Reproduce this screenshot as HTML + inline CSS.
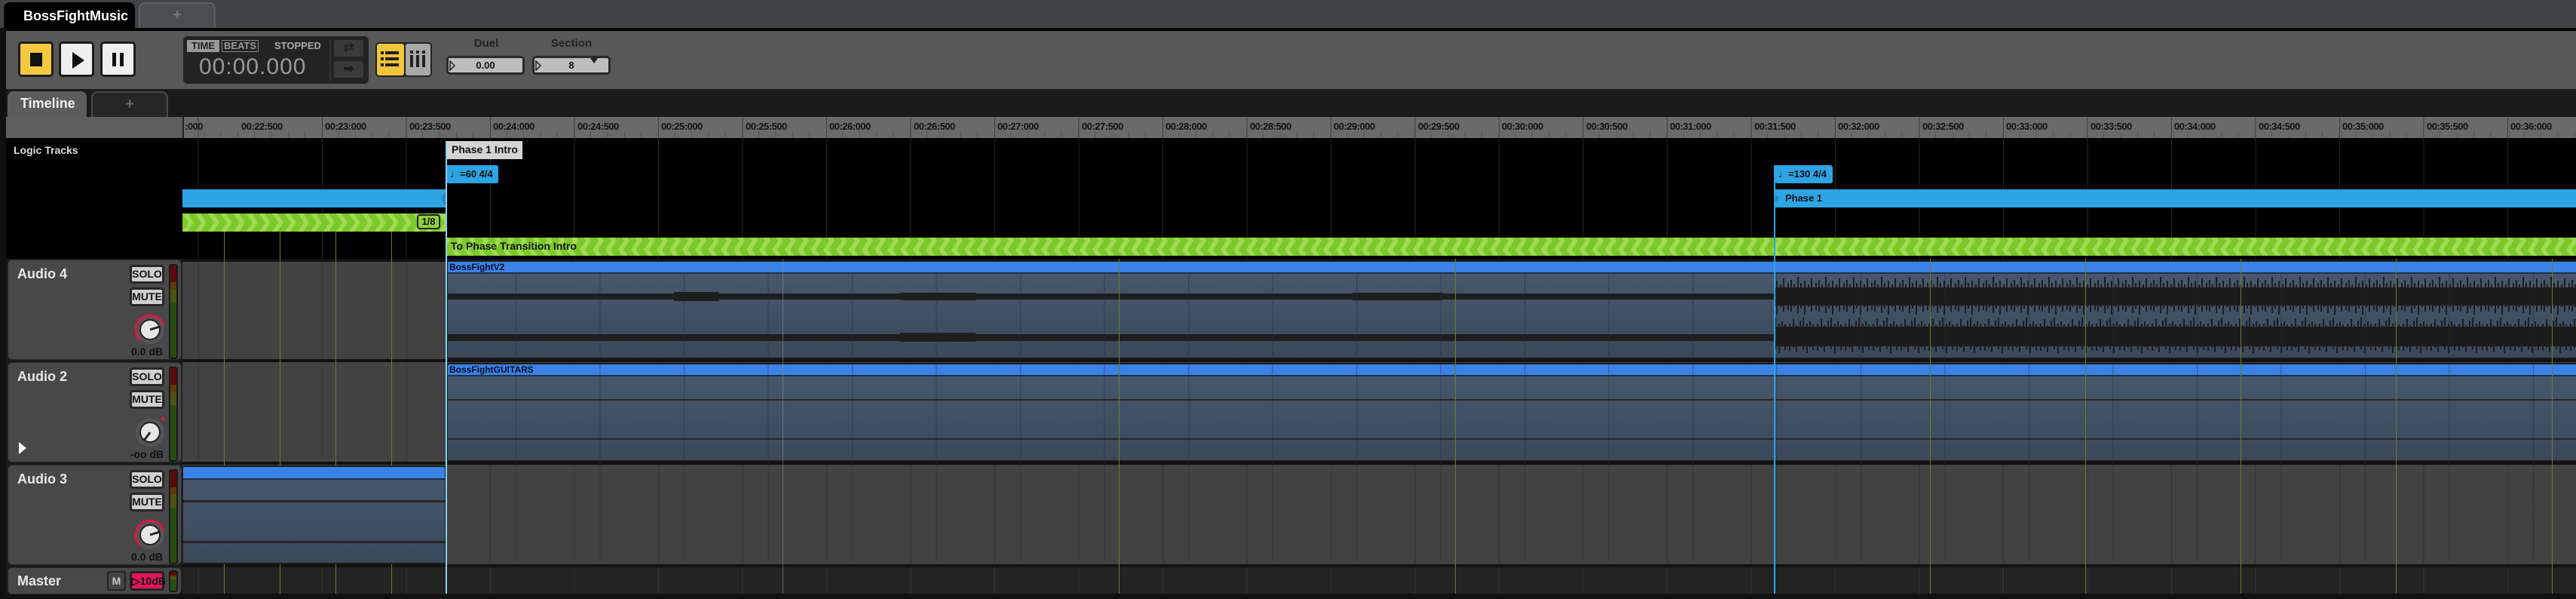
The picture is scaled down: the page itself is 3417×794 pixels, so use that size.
<!DOCTYPE html>
<html><head><meta charset="utf-8">
<style>
*{margin:0;padding:0;box-sizing:border-box}
body{width:3417px;height:794px;background:#1a1a1a;position:relative;overflow:hidden;font-family:"Liberation Sans Narrow","Liberation Sans",sans-serif;font-weight:bold;font-stretch:condensed}
.a{position:absolute}
.btn{position:absolute;border:3px solid #1b1b1b;border-radius:5px}
.rl{position:absolute;top:160px;font-size:13px;color:#111;letter-spacing:-0.5px}
.hdr{position:absolute;left:10px;width:231px;background:#484848;border-radius:6px;border:1px solid #2a2a2a}
.tname{position:absolute;left:12px;font-size:18px;color:#e8e8e8}
.sb{position:absolute;left:161px;width:46px;height:25px;background:#cfcfcf;border:3px solid #262626;border-radius:4px;font-size:14px;color:#111;text-align:center;line-height:19px}
.meter{position:absolute;left:213px;width:12px;border:2px solid #1a1a1a;border-radius:3px;background:linear-gradient(#5a0a0a 0,#5a0a0a 18%,#5e3a0a 18%,#5e3a0a 26%,#4e5410 26%,#4e5410 40%,#244e14 40%,#244e14 100%)}
.db{position:absolute;left:160px;width:48px;text-align:center;font-size:14px;color:#111}
.clip{position:absolute;background:linear-gradient(#4a596e,#3b485a);border:2px solid #1c1c1c;border-radius:4px;overflow:hidden}
.ch{position:absolute;left:0;right:0;top:0;height:16px;background:#3a82e6;border-bottom:2px solid #1f2f48;font-size:12px;color:#0a0a20;padding-left:2px;line-height:14px}
</style></head><body>
<div class="a" style="left:0;top:0;width:3417px;height:37px;background:#404444"></div>
<div class="a" style="left:5px;top:3px;width:174px;height:36px;background:#000;border-radius:8px 8px 0 0;color:#fff;font-size:18px;padding:8px 0 0 26px">BossFightMusic</div>
<div class="a" style="left:184px;top:3px;width:102px;height:34px;background:#4a4e50;border:2px solid #5c6062;border-bottom:none;border-radius:8px 8px 0 0;color:#777;font-size:20px;text-align:center;line-height:30px">+</div>
<div class="a" style="left:0;top:37px;width:3417px;height:4px;background:#000"></div>
<div class="a" style="left:8px;top:41px;width:3409px;height:77px;background:#585858"></div>
<div class="a" style="left:0;top:37px;width:8px;height:757px;background:#111"></div>
<div class="btn" style="left:24px;top:55px;width:47px;height:47px;background:#f5c842"><div class="a" style="left:13px;top:12px;width:16px;height:18px;background:#111"></div></div>
<div class="btn" style="left:78px;top:55px;width:47px;height:47px;background:#eee"><svg class="a" style="left:12px;top:10px" width="20" height="24"><polygon points="3,1 19,12 3,23" fill="#111"/></svg></div>
<div class="btn" style="left:133px;top:55px;width:47px;height:47px;background:#eee"><div class="a" style="left:13px;top:12px;width:5px;height:18px;background:#111"></div><div class="a" style="left:23px;top:12px;width:5px;height:18px;background:#111"></div></div>
<div class="a" style="left:243px;top:48px;width:246px;height:63px;background:#232323;border-radius:6px"></div>
<div class="a" style="left:248px;top:53px;width:43px;height:16px;background:#9a9a9a;color:#222;font-size:13px;text-align:center;line-height:16px">TIME</div>
<div class="a" style="left:294px;top:53px;width:49px;height:16px;border:1px solid #888;color:#999;font-size:13px;text-align:center;line-height:14px">BEATS</div>
<div class="a" style="left:364px;top:53px;color:#aaa;font-size:13px;line-height:16px">STOPPED</div>
<div class="a" style="left:264px;top:72px;color:#999;font-size:30px;font-weight:normal;letter-spacing:1px;font-family:'Liberation Sans',sans-serif">00:00.000</div>
<div class="a" style="left:437px;top:52px;width:2px;height:56px;background:#333"></div>
<div class="a" style="left:443px;top:53px;width:39px;height:22px;background:#3a3a3a;border-radius:3px;color:#222;font-size:16px;text-align:center;line-height:22px">⇄</div>
<div class="a" style="left:443px;top:81px;width:39px;height:22px;background:#3a3a3a;border-radius:3px;color:#1a1a1a;font-size:16px;text-align:center;line-height:22px">➡</div>
<div class="a" style="left:498px;top:56px;width:75px;height:46px;background:#222;border-radius:5px"></div>
<div class="a" style="left:500px;top:58px;width:36px;height:42px;background:#f0c43c;border-radius:3px"></div>
<svg class="a" style="left:505px;top:67px" width="26" height="24"><g fill="#222"><rect x="0" y="1" width="4" height="4"/><rect x="6" y="1" width="18" height="4"/><rect x="0" y="9" width="4" height="4"/><rect x="6" y="9" width="18" height="4"/><rect x="0" y="17" width="4" height="4"/><rect x="6" y="17" width="18" height="4"/></g></svg>
<div class="a" style="left:538px;top:58px;width:33px;height:42px;background:#a8a8a8;border-radius:3px"></div>
<svg class="a" style="left:543px;top:67px" width="24" height="24"><g fill="#222"><rect x="1" y="0" width="4" height="4"/><rect x="1" y="6" width="4" height="16"/><rect x="9" y="0" width="4" height="4"/><rect x="9" y="6" width="4" height="16"/><rect x="17" y="0" width="4" height="4"/><rect x="17" y="6" width="4" height="16"/></g></svg>
<div class="a" style="left:620px;top:49px;width:50px;text-align:center;color:#222;font-size:15px">Duel</div>
<div class="a" style="left:592px;top:74px;width:104px;height:25px;background:#bdbdbd;border:3px solid #2a2a2a;border-radius:5px;font-size:13px;color:#111;text-align:center;line-height:19px">0.00</div>
<svg class="a" style="left:596px;top:80px" width="8" height="14"><polygon points="1,1 7,7 1,13" fill="none" stroke="#222" stroke-width="1.5"/></svg>
<div class="a" style="left:730px;top:49px;width:56px;text-align:center;color:#222;font-size:15px">Section</div>
<div class="a" style="left:706px;top:74px;width:104px;height:25px;background:#bdbdbd;border:3px solid #2a2a2a;border-radius:5px;font-size:13px;color:#111;text-align:center;line-height:19px">8</div>
<svg class="a" style="left:710px;top:80px" width="8" height="14"><polygon points="1,1 7,7 1,13" fill="none" stroke="#222" stroke-width="1.5"/></svg>
<svg class="a" style="left:783px;top:77px" width="10" height="8"><polygon points="0,0 10,0 5,7" fill="#222"/></svg>
<div class="a" style="left:8px;top:118px;width:3409px;height:37px;background:#1b1b1b"></div>
<div class="a" style="left:10px;top:121px;width:105px;height:34px;background:#5c5c5c;border-radius:8px 8px 0 0;color:#f0f0f0;font-size:18px;padding:6px 0 0 17px">Timeline</div>
<div class="a" style="left:121px;top:121px;width:102px;height:34px;background:#262626;border:2px solid #4a4a4a;border-bottom:none;border-radius:8px 8px 0 0;color:#666;font-size:20px;text-align:center;line-height:30px">+</div>
<div class="a" style="left:8px;top:155px;width:234px;height:28px;background:#5e5e5e"></div>
<div class="a" style="left:242px;top:155px;width:3175px;height:28px;background:#6a6a6a;border-left:2px solid #222"></div>
<div class="a" style="left:242px;top:174px;width:3175px;height:9px;background:repeating-linear-gradient(90deg,transparent 0,transparent 21.3px,#555 21.3px,#555 22.3px);background-position:7px 0"></div>
<div class="a" style="left:242px;top:155px;width:3175px;height:28px;background:repeating-linear-gradient(90deg,transparent 0,transparent 110.5px,#3e3e3e 110.5px,#3e3e3e 111.5px);background-position:74.5px 0"></div>
<div class="rl" style="left:245px">:000</div>
<div class="rl" style="left:320px">00:22:500</div><div class="rl" style="left:431px">00:23:000</div><div class="rl" style="left:543px">00:23:500</div><div class="rl" style="left:654px">00:24:000</div><div class="rl" style="left:766px">00:24:500</div><div class="rl" style="left:877px">00:25:000</div><div class="rl" style="left:989px">00:25:500</div><div class="rl" style="left:1100px">00:26:000</div><div class="rl" style="left:1212px">00:26:500</div><div class="rl" style="left:1323px">00:27:000</div><div class="rl" style="left:1435px">00:27:500</div><div class="rl" style="left:1546px">00:28:000</div><div class="rl" style="left:1658px">00:28:500</div><div class="rl" style="left:1769px">00:29:000</div><div class="rl" style="left:1881px">00:29:500</div><div class="rl" style="left:1992px">00:30:000</div><div class="rl" style="left:2104px">00:30:500</div><div class="rl" style="left:2215px">00:31:000</div><div class="rl" style="left:2327px">00:31:500</div><div class="rl" style="left:2438px">00:32:000</div><div class="rl" style="left:2550px">00:32:500</div><div class="rl" style="left:2661px">00:33:000</div><div class="rl" style="left:2773px">00:33:500</div><div class="rl" style="left:2884px">00:34:000</div><div class="rl" style="left:2996px">00:34:500</div><div class="rl" style="left:3107px">00:35:000</div><div class="rl" style="left:3219px">00:35:500</div><div class="rl" style="left:3330px">00:36:000</div>
<div class="a" style="left:8px;top:183px;width:3409px;height:160px;background:#000"></div>
<div class="a" style="left:242px;top:183px;width:3175px;height:160px;background:repeating-linear-gradient(90deg,transparent 0,transparent 110.5px,#262626 110.5px,#262626 111.5px);background-position:74.5px 0"></div>
<div class="a" style="left:18px;top:191px;color:#ddd;font-size:14px">Logic Tracks</div>
<div class="a" style="left:242px;top:343px;width:3175px;height:409px;background:#424242"></div>
<div class="a" style="left:242px;top:752px;width:3175px;height:35px;background:#232323"></div>
<div class="a" style="left:242px;top:343px;width:3175px;height:444px;background:repeating-linear-gradient(90deg,transparent 0,transparent 110.5px,#353535 110.5px,#353535 111.5px);background-position:74.5px 0"></div>
<div class="a" style="left:242px;top:343px;width:3175px;height:4px;background:#111"></div>
<div class="a" style="left:242px;top:476px;width:3175px;height:4px;background:#111"></div>
<div class="a" style="left:242px;top:612px;width:3175px;height:4px;background:#111"></div>
<div class="a" style="left:242px;top:748px;width:3175px;height:4px;background:#111"></div>
<div class="a" style="left:8px;top:787px;width:3409px;height:7px;background:#111"></div>
<div class="a" style="left:297px;top:307px;width:1px;height:480px;background:#6c7e2a"></div>
<div class="a" style="left:371px;top:307px;width:1px;height:480px;background:#6c7e2a"></div>
<div class="a" style="left:445px;top:307px;width:1px;height:480px;background:#6c7e2a"></div>
<div class="a" style="left:519px;top:307px;width:1px;height:480px;background:#6c7e2a"></div>
<div class="clip" style="left:592px;top:345px;width:2830px;height:131px"><div class="ch">BossFightV2</div>
<svg class="a" style="left:0;top:16px" width="2830" height="115">
<defs><pattern id="w1" width="37" height="115" patternUnits="userSpaceOnUse"><g stroke="#1c1c1c" stroke-width="2"><line x1="2" y1="12" x2="2" y2="48"/><line x1="6" y1="8" x2="6" y2="50"/><line x1="10" y1="14" x2="10" y2="44"/><line x1="15" y1="4" x2="15" y2="52"/><line x1="19" y1="12" x2="19" y2="46"/><line x1="24" y1="9" x2="24" y2="54"/><line x1="29" y1="14" x2="29" y2="44"/><line x1="33" y1="6" x2="33" y2="50"/><line x1="4" y1="66" x2="4" y2="102"/><line x1="9" y1="60" x2="9" y2="98"/><line x1="13" y1="68" x2="13" y2="104"/><line x1="18" y1="62" x2="18" y2="96"/><line x1="22" y1="58" x2="22" y2="100"/><line x1="27" y1="66" x2="27" y2="105"/><line x1="31" y1="63" x2="31" y2="97"/><line x1="35" y1="67" x2="35" y2="101"/></g><rect x="0" y="18" width="37" height="24" fill="#1c1c1c"/><rect x="0" y="70" width="37" height="26" fill="#1c1c1c"/></pattern></defs>
<rect x="0" y="26" width="1761" height="8" fill="#1e1e1e"/><rect x="0" y="80" width="1761" height="9" fill="#1e1e1e"/>
<rect x="300" y="24" width="60" height="12" fill="#1e1e1e"/><rect x="600" y="25" width="100" height="10" fill="#1e1e1e"/><rect x="600" y="78" width="100" height="12" fill="#1e1e1e"/><rect x="1200" y="25" width="120" height="10" fill="#1e1e1e"/>
<rect x="1761" y="0" width="1070" height="115" fill="url(#w1)"/></svg></div>
<div class="clip" style="left:592px;top:481px;width:2830px;height:131px"><div class="ch">BossFightGUITARS</div>
<div class="a" style="left:0;top:46px;width:2830px;height:2px;background:#262626"></div>
<div class="a" style="left:0;top:98px;width:2830px;height:2px;background:#262626"></div></div>
<div class="clip" style="left:241px;top:617px;width:351px;height:131px"><div class="ch" style="height:17px"></div>
<div class="a" style="left:0;top:44px;width:351px;height:3px;background:#262626"></div>
<div class="a" style="left:0;top:98px;width:351px;height:3px;background:#262626"></div></div>
<div class="a" style="left:594px;top:363px;width:2823px;height:380px;background:repeating-linear-gradient(90deg,transparent 0,transparent 110.5px,rgba(30,40,55,.45) 110.5px,rgba(30,40,55,.45) 111.5px);background-position:-20.5px 0"></div>
<div class="a" style="left:1038px;top:343px;width:1px;height:444px;background:#8a8a8a;opacity:.6"></div>
<div class="a" style="left:1484px;top:343px;width:1px;height:444px;background:#6c7e2a"></div>
<div class="a" style="left:1930px;top:343px;width:1px;height:444px;background:#6c7e2a"></div>
<div class="a" style="left:2560px;top:343px;width:1px;height:444px;background:#6c7e2a"></div>
<div class="a" style="left:2766px;top:343px;width:1px;height:444px;background:#6c7e2a"></div>
<div class="a" style="left:2972px;top:343px;width:1px;height:444px;background:#6c7e2a"></div>
<div class="a" style="left:3178px;top:343px;width:1px;height:444px;background:#6c7e2a"></div>
<div class="a" style="left:3385px;top:343px;width:1px;height:444px;background:#6c7e2a"></div>
<div class="a" style="left:242px;top:251px;width:349px;height:24px;background:#2ea4e4"></div>
<svg class="a" style="left:580px;top:251px" width="12" height="24"><polygon points="12,0 12,24 5,12" fill="#1e88c0"/></svg>
<svg class="a" style="left:242px;top:283px" width="3175" height="56">
<defs><pattern id="chev" width="17" height="24" patternUnits="userSpaceOnUse"><rect width="17" height="24" fill="#7cc72a"/><polygon points="0,0 7,0 15,12 7,24 0,24 8,12" fill="#9ddc50"/></pattern></defs>
<rect x="0" y="0" width="349" height="24" fill="url(#chev)"/>
<rect x="350" y="32" width="2825" height="24" fill="url(#chev)"/></svg>
<div class="a" style="left:553px;top:284px;width:31px;height:20px;border:2px solid #222;border-radius:4px;background:#8ed03c;color:#111;font-size:13px;text-align:center;line-height:16px">1/8</div>
<div class="a" style="left:598px;top:318px;color:#111;font-size:14px">To Phase Transition Intro</div>
<div class="a" style="left:2354px;top:251px;width:1063px;height:24px;background:#2ea4e4;color:#111;font-size:13px;padding-left:14px;line-height:24px">Phase 1</div>
<svg class="a" style="left:2354px;top:251px" width="8" height="24"><polygon points="0,6 6,12 0,18" fill="#1e88c0"/></svg>
<div class="a" style="left:592px;top:187px;width:101px;height:24px;background:#d4d4d4;color:#111;font-size:14px;padding:3px 0 0 7px">Phase 1 Intro</div>
<div class="a" style="left:592px;top:219px;width:69px;height:24px;background:#2ea4e4;border-radius:0 3px 3px 3px;color:#111;font-size:13px;padding:4px 0 0 5px">♩=60 4/4</div>
<div class="a" style="left:2354px;top:219px;width:77px;height:24px;background:#2ea4e4;border-radius:0 3px 3px 3px;color:#111;font-size:13px;padding:4px 0 0 5px">♩=130 4/4</div>
<div class="a" style="left:591px;top:187px;width:2px;height:600px;background:#8ad0ee"></div>
<div class="a" style="left:2353px;top:219px;width:2px;height:568px;background:#2ea4e4"></div>
<div class="hdr" style="top:344px;height:133px"><div class="tname" style="top:8px">Audio 4</div>
<div class="sb" style="top:6px">SOLO</div><div class="sb" style="top:36px">MUTE</div>
<div class="meter" style="top:5px;height:126px"></div>
<svg class="a" style="left:165px;top:69px" width="46" height="44"><circle cx="23" cy="23" r="19" fill="#555"/><path d="M10,37 A19,19 0 1 1 41,17" fill="none" stroke="#d8184a" stroke-width="3"/><circle cx="23" cy="23" r="13" fill="#e6e6e6" stroke="#222" stroke-width="2"/><line x1="23" y1="23" x2="36" y2="19" stroke="#222" stroke-width="3"/></svg>
<div class="db" style="top:113px">0.0 dB</div></div>
<div class="hdr" style="top:480px;height:133px"><div class="tname" style="top:8px">Audio 2</div>
<div class="sb" style="top:6px">SOLO</div><div class="sb" style="top:36px">MUTE</div>
<div class="meter" style="top:5px;height:126px"></div>
<svg class="a" style="left:165px;top:69px" width="46" height="44"><circle cx="23" cy="23" r="19" fill="#555"/><circle cx="40" cy="5" r="2.5" fill="#d8184a"/><circle cx="23" cy="23" r="13" fill="#e6e6e6" stroke="#222" stroke-width="2"/><line x1="23" y1="23" x2="15" y2="34" stroke="#222" stroke-width="3"/></svg>
<div class="db" style="top:113px">-oo dB</div>
<svg class="a" style="left:13px;top:105px" width="12" height="16"><polygon points="1,0 11,8 1,16" fill="#fff"/></svg></div>
<div class="hdr" style="top:616px;height:133px"><div class="tname" style="top:8px">Audio 3</div>
<div class="sb" style="top:6px">SOLO</div><div class="sb" style="top:36px">MUTE</div>
<div class="meter" style="top:5px;height:126px"></div>
<svg class="a" style="left:165px;top:69px" width="46" height="44"><circle cx="23" cy="23" r="19" fill="#555"/><path d="M10,37 A19,19 0 1 1 41,17" fill="none" stroke="#d8184a" stroke-width="3"/><circle cx="23" cy="23" r="13" fill="#e6e6e6" stroke="#222" stroke-width="2"/><line x1="23" y1="23" x2="36" y2="19" stroke="#222" stroke-width="3"/></svg>
<div class="db" style="top:113px">0.0 dB</div></div>
<div class="hdr" style="top:752px;height:36px"><div class="tname" style="top:7px">Master</div>
<div class="a" style="left:131px;top:4px;width:25px;height:26px;background:#444;border:2px solid #222;border-radius:3px;color:#ccc;font-size:14px;text-align:center;line-height:22px">M</div>
<div class="a" style="left:161px;top:4px;width:46px;height:26px;background:#e0165a;border:3px solid #222;border-radius:4px;color:#111;font-size:14px;text-align:center;line-height:20px">▷10dB</div>
<div class="meter" style="top:3px;height:29px"></div></div>
</body></html>
